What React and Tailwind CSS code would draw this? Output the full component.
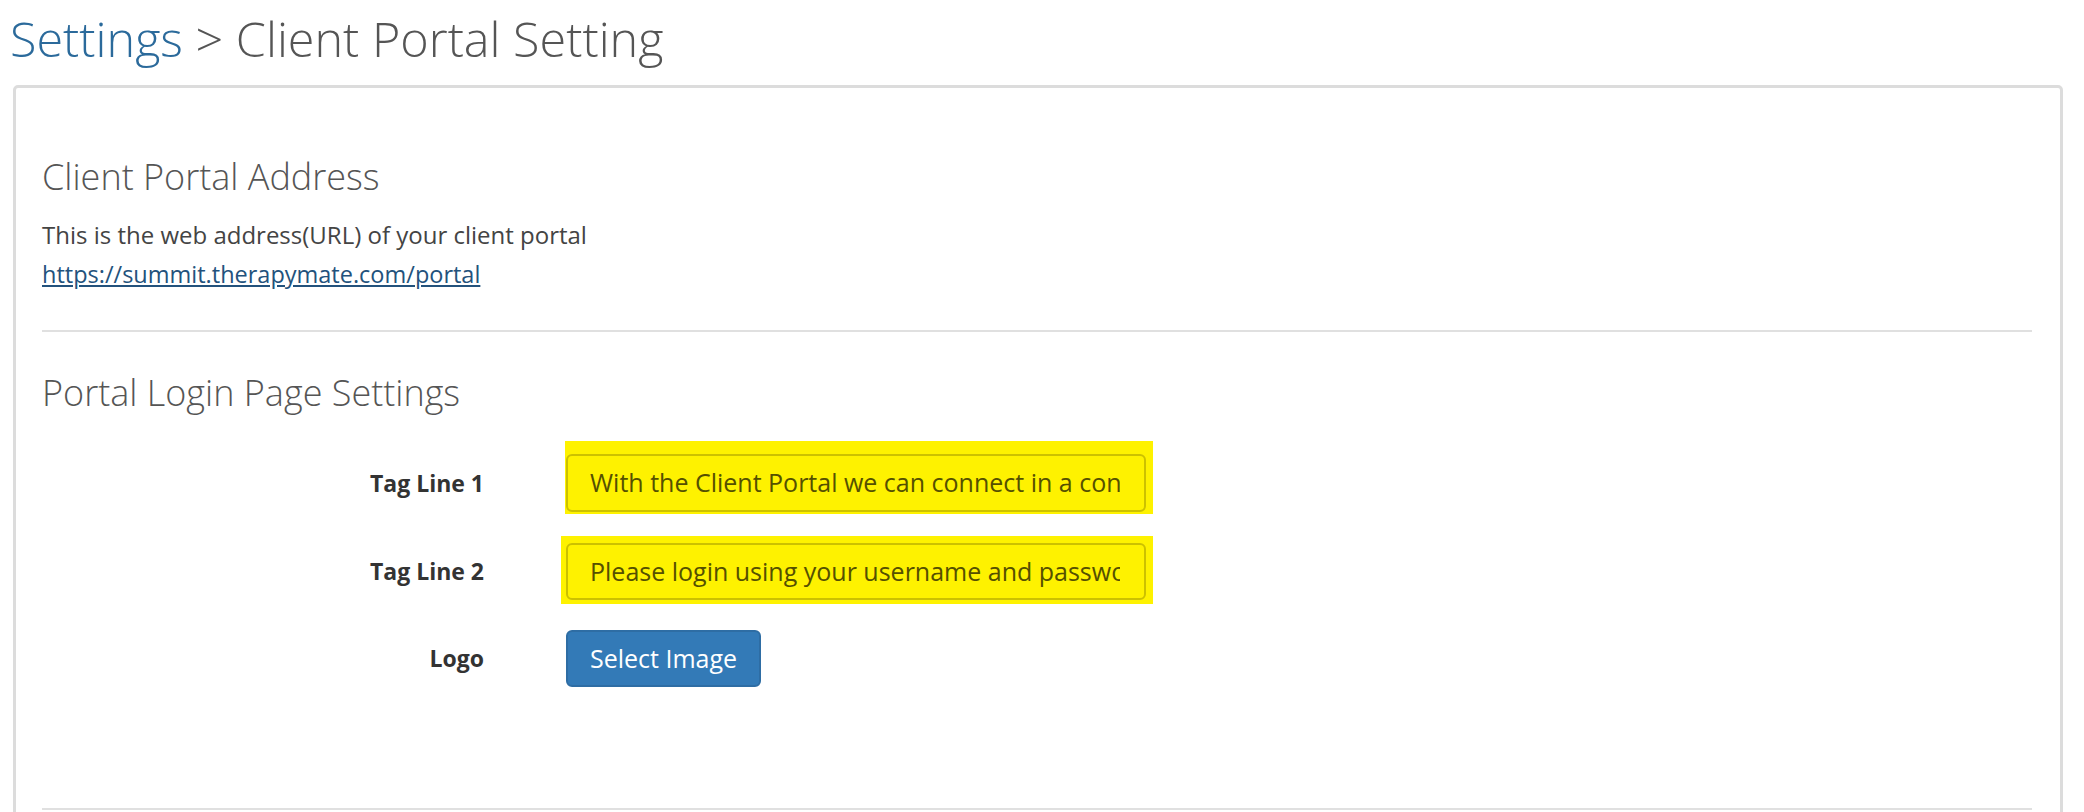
export default function App() {
    const font = { fontFamily: '"Open Sans", "Liberation Sans", sans-serif' };

    return (
        <div className="h-[812px] overflow-hidden bg-white" style={font}>
            {/* page title */}
            <h1 className="mt-[12px] pl-[10px] text-[48.5px] leading-[53px] font-light text-[#555]">
                <span className="text-[#2b6a9b]">Settings</span> &gt; Client Portal Setting
            </h1>

            <div className="mt-[20px] ml-[13px] mr-[21px] h-[800px] border-[3px] border-[#dcdcdc] rounded-[5px] pt-[69px] pl-[26px] pr-[28px]">
                {/* client portal address */}
                <h3 className="text-[36px] leading-[40px] font-light text-[#555]">Client Portal Address</h3>
                <p className="mt-[21px] text-[24px] leading-[34px] text-[#444]">This is the web address(URL) of your client portal</p>
                <a href="#" className="block mt-[5px] text-[23.5px] leading-[34px] text-[#23527c] underline">https://summit.therapymate.com/portal</a>
                <div className="mt-[39px] h-[2px] bg-[#e0e0e0]"></div>

                {/* login page settings */}
                <h3 className="mt-[41px] text-[36px] leading-[40px] font-light text-[#555]">Portal Login Page Settings</h3>

                <div className="mt-[28px] flex">
                    <div className="w-[442px] mt-[13px] h-[58px] flex items-center justify-end text-[23px] font-bold text-[#333]">Tag Line 1</div>
                    <div className="ml-[81px] bg-[#fef200] pt-[13px] pb-[2px] pl-[1px] pr-[7px]">
                        <div className="w-[580px] h-[58px] border-2 border-[#ccc100] rounded-[6px] pl-[22px] pr-[24px] flex items-center overflow-hidden">
                            <span className="whitespace-nowrap overflow-hidden text-[25px] text-[#555000]">With the Client Portal we can connect in a convenient and secure way</span>
                        </div>
                    </div>
                </div>

                <div className="mt-[22px] flex">
                    <div className="w-[442px] mt-[7px] h-[57px] flex items-center justify-end text-[23px] font-bold text-[#333]">Tag Line 2</div>
                    <div className="ml-[77px] bg-[#fef200] pt-[7px] pb-[4px] pl-[5px] pr-[7px]">
                        <div className="w-[580px] h-[57px] border-2 border-[#ccc100] rounded-[6px] pl-[22px] pr-[24px] flex items-center overflow-hidden">
                            <span className="whitespace-nowrap overflow-hidden text-[25px] text-[#555000]">Please login using your username and password</span>
                        </div>
                    </div>
                </div>

                <div className="mt-[26px] flex items-center">
                    <div className="w-[442px] text-right text-[23px] font-bold text-[#333]">Logo</div>
                    <button className="ml-[82px] w-[195px] h-[57px] bg-[#337ab7] border-2 border-[#2e6da4] rounded-[6px] text-white text-[25px]">Select Image</button>
                </div>

                <div className="mt-[121px] h-[2px] bg-[#e0e0e0]"></div>
            </div>
        </div>
    );
}
